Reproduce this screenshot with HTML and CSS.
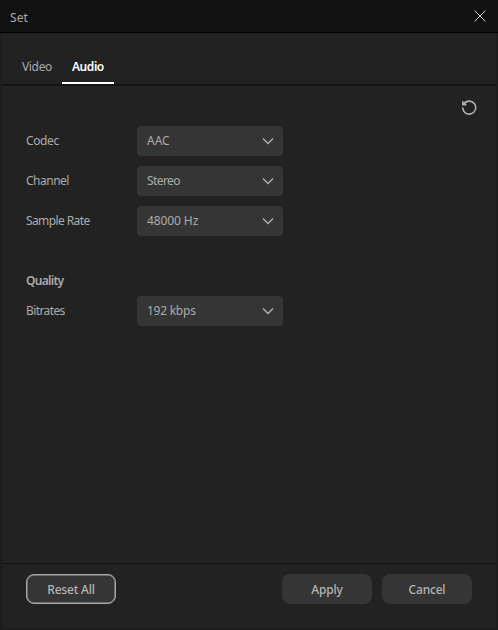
FILE: index.html
```html
<!DOCTYPE html>
<html lang="en">
<head>
<meta charset="utf-8">
<title>Set</title>
<link rel="stylesheet" href="styles.css">
</head>
<body>
<div class="window">
  <header class="titlebar">
    <span class="title">Set</span>
    <svg class="close" width="12" height="12" viewBox="0 0 12 12"><path d="M.5.5l11 11M11.5.5l-11 11"/></svg>
  </header>
  <main class="content">
    <nav class="tabs">
      <span class="tab video">Video</span>
      <span class="tab active">Audio</span>
    </nav>
    <section class="panel">
      <div class="tools">
        <svg class="reset" width="16" height="16" viewBox="0 0 16 16"><path d="M2.8 4A6.5 6.5 0 1 1 1.7 7.4M1.8 1.2v3.4h3.6"/></svg>
      </div>
      <div class="row"><span class="label codec">Codec</span><div class="select"><span class="aac">AAC</span><svg class="chevron" width="12" height="8" viewBox="0 0 12 8"><path d="M1 1.5l5 5 5-5"/></svg></div></div>
      <div class="row"><span class="label channel">Channel</span><div class="select"><span class="stereo">Stereo</span><svg class="chevron" width="12" height="8" viewBox="0 0 12 8"><path d="M1 1.5l5 5 5-5"/></svg></div></div>
      <div class="row"><span class="label rate">Sample Rate</span><div class="select"><span class="hertz">48000 Hz</span><svg class="chevron" width="12" height="8" viewBox="0 0 12 8"><path d="M1 1.5l5 5 5-5"/></svg></div></div>
      <h2 class="heading">Quality</h2>
      <div class="row"><span class="label bitrates">Bitrates</span><div class="select"><span class="kbps">192 kbps</span><svg class="chevron" width="12" height="8" viewBox="0 0 12 8"><path d="M1 1.5l5 5 5-5"/></svg></div></div>
    </section>
    <footer class="footer">
      <button class="button outlined">Reset All</button>
      <button class="button apply">Apply</button>
      <button class="button">Cancel</button>
    </footer>
  </main>
</div>
</body>
</html>
```
FILE: styles.css
```css
* { box-sizing: border-box; }
body {
  margin: 0;
  background: #1d1d1d;
  color: #ababab;
  font: 12px/16px "Noto Sans", "Open Sans", sans-serif;
  letter-spacing: -0.3px;
}
svg { fill: none; stroke: #b0b0b0; flex: none; }
.window { width: 498px; height: 630px; display: flex; flex-direction: column; }
.titlebar {
  height: 33px;
  display: flex;
  justify-content: space-between;
  align-items: center;
  padding: 0 12px 0 10px;
  background: #111;
  border-bottom: 1px solid #000;
}
.title { padding-top: 3px; letter-spacing: 0.1px; }
.close { stroke: #ccc; stroke-width: 1; }
.content {
  flex: 1;
  display: flex;
  flex-direction: column;
  margin: 0 2px 2px;
  background: #222;
}
.tabs {
  height: 53px;
  display: flex;
  align-items: flex-end;
  padding-left: 10px;
  border-bottom: 2px solid #141414;
}
.tab { height: 25px; width: 50px; padding-left: 10px; }
.video { letter-spacing: -0.35px; }
.tab.active { width: 52px; color: #fff; font-weight: 600; letter-spacing: -0.45px; border-bottom: 2px solid #fff; }
.panel { flex: 1; padding: 14px 19px 0 24px; }
.tools { height: 26px; display: flex; justify-content: flex-end; }
.reset { stroke-width: 1.6; }
.row { height: 30px; margin-bottom: 10px; display: flex; align-items: center; }
.label { width: 111px; }
.codec { letter-spacing: -0.4px; }
.channel { letter-spacing: -0.5px; }
.rate { letter-spacing: -0.6px; }
.bitrates { letter-spacing: -0.6px; }
.aac { letter-spacing: 0; }
.stereo { letter-spacing: -0.6px; }
.hertz { letter-spacing: -0.1px; }
.kbps { letter-spacing: -0.25px; }
.select {
  width: 146px;
  height: 30px;
  display: flex;
  align-items: center;
  justify-content: space-between;
  padding: 0 9px 0 10px;
  background: #353535;
  border-radius: 4px;
}
.chevron { stroke-width: 1.4; }
.heading { margin: 37px 0 7px; font-size: 12px; line-height: 16px; font-weight: 600; letter-spacing: -0.7px; }
.footer {
  height: 65px;
  display: flex;
  gap: 10px;
  padding: 10px 24px;
  border-top: 1px solid #111;
}
.button {
  width: 90px;
  height: 30px;
  padding: 2px 0 0;
  border: 0;
  border-radius: 8px;
  background: #353535;
  color: #b4b4b4;
  font: 500 12px/16px "Noto Sans", "Open Sans", sans-serif;
  letter-spacing: -0.2px;
}
.outlined { border: 1px solid #a8a8a8; box-shadow: inset 0 0 0 0.5px #a8a8a8; }
.apply { margin-left: auto; }
```
